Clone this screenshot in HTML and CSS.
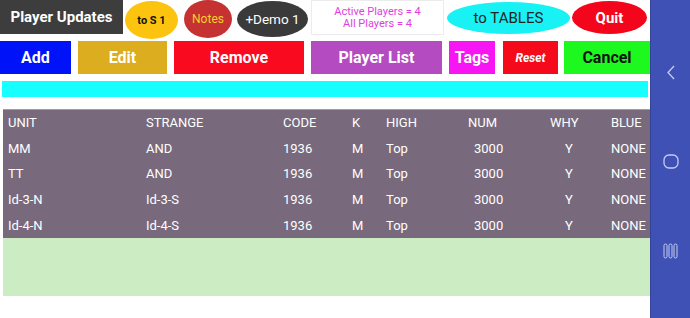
FILE: index.html
```html
<!DOCTYPE html>
<html>
	<head>
		<meta charset="utf-8">
		<title>Player Updates</title>
		<link rel="stylesheet" href="styles.css">
	</head>
	<body>
		<div class="screen">
			<div class="app">
				<!-- 顶部一行 -->
				<div class="topRow">
					<div class="title">Player Updates</div>
					<div class="oval toS1">to S 1</div>
					<div class="oval notes">Notes</div>
					<div class="oval demo">+Demo 1</div>
					<div class="info">
						<span>Active Players = 4</span>
						<span>All Players = 4</span>
					</div>
					<div class="oval tables">to TABLES</div>
					<div class="oval quit">Quit</div>
				</div>
				<!-- 按钮一行 -->
				<div class="btnRow">
					<div class="btn add">Add</div>
					<div class="btn edit">Edit</div>
					<div class="btn remove">Remove</div>
					<div class="btn list">Player List</div>
					<div class="btn tags">Tags</div>
					<div class="btn reset">Reset</div>
					<div class="btn cancel">Cancel</div>
				</div>
				<div class="cyanBar"></div>
				<div class="table">
					<div class="row">
						<span>UNIT</span><span>STRANGE</span><span>CODE</span><span>K</span><span>HIGH</span><span>NUM</span><span>WHY</span><span>BLUE</span>
					</div>
					<div class="row">
						<span>MM</span><span>AND</span><span>1936</span><span>M</span><span>Top</span><span class="num">3000</span><span class="why">Y</span><span>NONE</span>
					</div>
					<div class="row">
						<span>TT</span><span>AND</span><span>1936</span><span>M</span><span>Top</span><span class="num">3000</span><span class="why">Y</span><span>NONE</span>
					</div>
					<div class="row">
						<span>Id-3-N</span><span>Id-3-S</span><span>1936</span><span>M</span><span>Top</span><span class="num">3000</span><span class="why">Y</span><span>NONE</span>
					</div>
					<div class="row">
						<span>Id-4-N</span><span>Id-4-S</span><span>1936</span><span>M</span><span>Top</span><span class="num">3000</span><span class="why">Y</span><span>NONE</span>
					</div>
				</div>
				<div class="greenArea"></div>
			</div>
			<!-- 安卓导航栏 -->
			<div class="navBar">
				<svg width="12" height="15" viewBox="0 0 12 15">
					<path d="M9 1 L3 7.5 L9 14" fill="none" stroke="#c5cdf2" stroke-width="1.3"/>
				</svg>
				<svg width="16" height="15" viewBox="0 0 16 15">
					<rect x="1" y="1" width="14" height="13" rx="5" fill="none" stroke="#c5cdf2" stroke-width="1.3"/>
				</svg>
				<svg width="15" height="16" viewBox="0 0 15 16">
					<rect x="1" y="1" width="3" height="14" rx="1.5" fill="none" stroke="#c5cdf2" stroke-width="1"/>
					<rect x="6" y="1" width="3" height="14" rx="1.5" fill="none" stroke="#c5cdf2" stroke-width="1"/>
					<rect x="11" y="1" width="3" height="14" rx="1.5" fill="none" stroke="#c5cdf2" stroke-width="1"/>
				</svg>
			</div>
		</div>
	</body>
</html>
```

FILE: styles.css
```css
* {
	margin: 0;
	padding: 0;
	box-sizing: border-box;
}

html,
body {
	width: 100%;
	height: 100%;
	background: #fff;
	font-family: Roboto, "Liberation Sans", sans-serif;
}

.screen {
	display: flex;
	width: 690px;
	height: 318px;
}

.app {
	width: 650px;
	display: flex;
	flex-direction: column;
}

/* 顶部一行 */
.topRow {
	display: flex;
	align-items: flex-start;
	height: 39px;
}

.title {
	width: 123px;
	height: 34px;
	background: #3d3d3d;
	color: #fff;
	font-size: 15px;
	font-weight: bold;
	display: flex;
	justify-content: center;
	align-items: center;
}

.oval {
	border-radius: 50%;
	display: flex;
	justify-content: center;
	align-items: center;
}

.toS1 {
	width: 53px;
	height: 38px;
	margin: 1px 0 0 2px;
	background: #fcc40e;
	color: #111;
	font-size: 11px;
	font-weight: bold;
}

.notes {
	width: 48px;
	height: 38px;
	margin-left: 6px;
	background: #c63131;
	color: #f3d22a;
	font-size: 12px;
}

.demo {
	width: 71px;
	height: 36px;
	margin: 1px 0 0 5px;
	background: #3a3a3a;
	color: #fff;
	font-size: 13.5px;
}

.info {
	width: 133px;
	height: 35px;
	margin-left: 3px;
	border: 1px solid #ececec;
	color: #e03de0;
	font-size: 11px;
	display: flex;
	flex-direction: column;
	justify-content: center;
	align-items: center;
	line-height: 12px;
}

.tables {
	width: 123px;
	height: 32px;
	margin: 2px 0 0 3px;
	background: #19f2f5;
	color: #222;
	font-size: 15px;
}

.quit {
	width: 75px;
	height: 33px;
	margin: 1px 0 0 2px;
	background: #f3061c;
	color: #fff;
	font-size: 15px;
	font-weight: bold;
}

/* 按钮一行 */
.btnRow {
	display: flex;
	margin-top: 2px;
	height: 33px;
}

.btn {
	height: 33px;
	color: #fff;
	font-size: 16px;
	font-weight: bold;
	display: flex;
	justify-content: center;
	align-items: center;
	margin-left: 7px;
}

.add {
	width: 71px;
	margin-left: 0;
	background: #0012f7;
}

.edit {
	width: 89px;
	background: #dcad1f;
}

.remove {
	width: 130px;
	background: #fa0a1e;
}

.list {
	width: 131px;
	background: #b54bc0;
}

.tags {
	width: 46px;
	background: #f715f4;
}

.reset {
	width: 55px;
	margin-left: 8px;
	background: #f50a1c;
	font-size: 12px;
	font-style: italic;
}

.cancel {
	width: 86px;
	margin-left: 6px;
	background: #1df81e;
	color: #111;
}

.cyanBar {
	height: 16px;
	margin: 7px 2px 0 2px;
	background: #17fefe;
}

/* 表格 */
.table {
	margin: 12px 0 0 3px;
	background: #786a7c;
	border-top: 1px solid #a49aa6;
	color: #fff;
	font-size: 13px;
}

.table .row {
	display: grid;
	grid-template-columns: 138px 137px 69px 34px 82px 82px 61px 39px;
	padding-left: 5px;
	height: 25.6px;
	align-items: center;
}

.table .num {
	padding-left: 6px;
}

.table .why {
	padding-left: 15px;
}

.greenArea {
	height: 58px;
	margin-left: 3px;
	background: #ccedc4;
}

/* 导航栏 */
.navBar {
	width: 40px;
	background: #3f51b5;
	border-left: 1px solid #33439a;
	display: flex;
	flex-direction: column;
	align-items: center;
	padding-top: 65px;
	gap: 74px;
}
```
